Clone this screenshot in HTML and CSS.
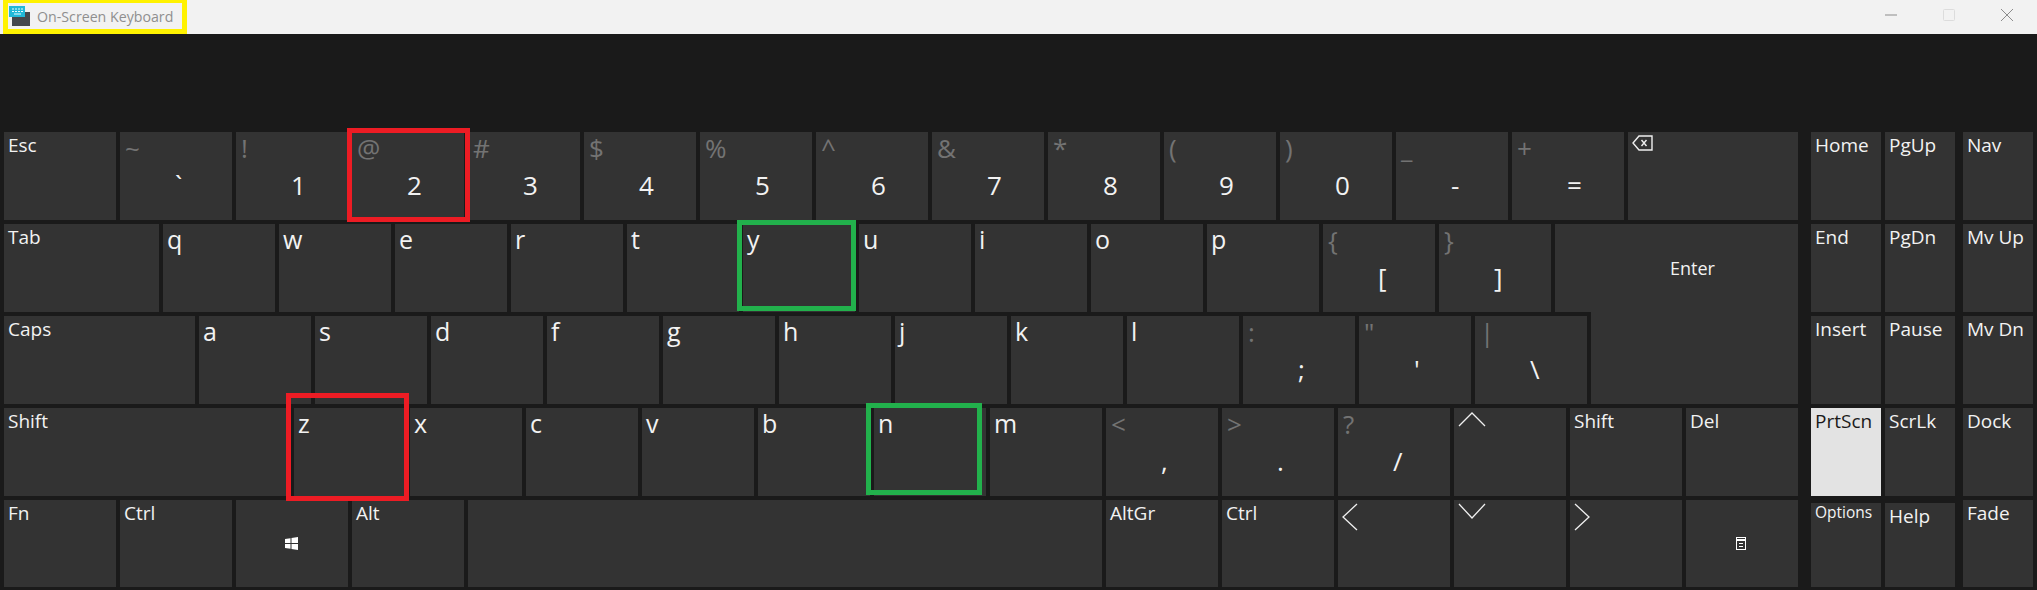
FILE: index.html
```html
<!DOCTYPE html>
<html lang="en">
<head>
    <meta charset="UTF-8">
    <meta name="viewport" content="width=device-width, initial-scale=1.0">
    <title>On-Screen Keyboard</title>
    <link rel="stylesheet" href="styles.css">
</head>
<body>
    <!-- Title bar -->
    <div class="titlebar">
        <div class="app-name">
            <svg class="app-icon" width="21" height="21" viewBox="0 0 21 21">
                <rect x="3" y="6" width="18" height="14" fill="#45484d"/>
                <rect x="0" y="0" width="16" height="11" fill="#22b8d8"/>
                <path d="M3 3h2M6 3h2M9 3h2M12 3h2M3 5.500h2M6 5.500h2M9 5.500h2M12 5.500h2M5 8h7" stroke="#e8fbff" stroke-width="1.2"/>
            </svg>
            <span>On-Screen Keyboard</span>
        </div>
        <div class="window-buttons">
            <svg width="12" height="12" viewBox="0 0 12 12"><path d="M0 6h12" stroke="#8c8c8c"/></svg>
            <svg width="12" height="12" viewBox="0 0 12 12"><rect x="0.500" y="0.500" width="11" height="11" rx="1" fill="none" stroke="#dcdcdc"/></svg>
            <svg width="12" height="12" viewBox="0 0 12 12"><path d="M0 0l12 12M12 0L0 12" stroke="#8c8c8c"/></svg>
        </div>
    </div>

    <div class="keyboard">
        <!-- Main keys -->
        <div class="main-keys">
            <div class="row">
                <div class="key"><span class="name">Esc</span></div>
                <div class="key"><span class="shift">~</span><span class="char">`</span></div>
                <div class="key"><span class="shift">!</span><span class="char">1</span></div>
                <div class="key"><span class="shift">@</span><span class="char">2</span></div>
                <div class="key"><span class="shift">#</span><span class="char">3</span></div>
                <div class="key"><span class="shift">$</span><span class="char">4</span></div>
                <div class="key"><span class="shift">%</span><span class="char">5</span></div>
                <div class="key"><span class="shift">^</span><span class="char">6</span></div>
                <div class="key"><span class="shift">&amp;</span><span class="char">7</span></div>
                <div class="key"><span class="shift">*</span><span class="char">8</span></div>
                <div class="key"><span class="shift">(</span><span class="char">9</span></div>
                <div class="key"><span class="shift">)</span><span class="char">0</span></div>
                <div class="key"><span class="shift">_</span><span class="char">-</span></div>
                <div class="key"><span class="shift">+</span><span class="char">=</span></div>
                <div class="key backspace">
                    <svg class="icon icon-back" width="21" height="16" viewBox="0 0 21 16">
                        <path d="M20 1H7L1 8l6 7h13z" fill="none" stroke="#f0f0f0" stroke-width="1.4"/>
                        <path d="M9.500 5l5 6M14.500 5l-5 6" stroke="#f0f0f0" stroke-width="1.4"/>
                    </svg>
                </div>
            </div>
            <div class="row">
                <div class="key tab"><span class="name">Tab</span></div>
                <div class="key"><span class="letter">q</span></div>
                <div class="key"><span class="letter">w</span></div>
                <div class="key"><span class="letter">e</span></div>
                <div class="key"><span class="letter">r</span></div>
                <div class="key"><span class="letter">t</span></div>
                <div class="key"><span class="letter">y</span></div>
                <div class="key"><span class="letter">u</span></div>
                <div class="key"><span class="letter">i</span></div>
                <div class="key"><span class="letter">o</span></div>
                <div class="key"><span class="letter">p</span></div>
                <div class="key"><span class="shift">{</span><span class="char">[</span></div>
                <div class="key"><span class="shift">}</span><span class="char">]</span></div>
                <div class="key enter-top"><span class="enter-label">Enter</span></div>
            </div>
            <div class="row">
                <div class="key caps"><span class="name">Caps</span></div>
                <div class="key"><span class="letter">a</span></div>
                <div class="key"><span class="letter">s</span></div>
                <div class="key"><span class="letter">d</span></div>
                <div class="key"><span class="letter">f</span></div>
                <div class="key"><span class="letter">g</span></div>
                <div class="key"><span class="letter">h</span></div>
                <div class="key"><span class="letter">j</span></div>
                <div class="key"><span class="letter">k</span></div>
                <div class="key"><span class="letter">l</span></div>
                <div class="key"><span class="shift">:</span><span class="char">;</span></div>
                <div class="key"><span class="shift">"</span><span class="char">'</span></div>
                <div class="key"><span class="shift">|</span><span class="char">\</span></div>
                <div class="key enter-foot"></div>
            </div>
            <div class="row">
                <div class="key lshift"><span class="name">Shift</span></div>
                <div class="key"><span class="letter">z</span></div>
                <div class="key"><span class="letter">x</span></div>
                <div class="key"><span class="letter">c</span></div>
                <div class="key"><span class="letter">v</span></div>
                <div class="key"><span class="letter">b</span></div>
                <div class="key"><span class="letter">n</span></div>
                <div class="key"><span class="letter">m</span></div>
                <div class="key"><span class="shift">&lt;</span><span class="char">,</span></div>
                <div class="key"><span class="shift">&gt;</span><span class="char">.</span></div>
                <div class="key"><span class="shift">?</span><span class="char">/</span></div>
                <div class="key">
                    <svg class="icon" width="28" height="16" viewBox="0 0 28 16"><path d="M1 15L14 2l13 13" fill="none" stroke="#f0f0f0" stroke-width="1.3"/></svg>
                </div>
                <div class="key"><span class="name">Shift</span></div>
                <div class="key"><span class="name">Del</span></div>
            </div>
            <div class="row">
                <div class="key"><span class="name">Fn</span></div>
                <div class="key"><span class="name">Ctrl</span></div>
                <div class="key center-icon">
                    <svg width="13" height="13" viewBox="0 0 13 13"><path d="M0 2l5.500-.8V6H0zM6.500 1l6.500-1v6H6.500zM0 7h5.500v4.800L0 11zM6.500 7H13v6l-6.500-1z" fill="#fff"/></svg>
                </div>
                <div class="key"><span class="name">Alt</span></div>
                <div class="key space"></div>
                <div class="key"><span class="name">AltGr</span></div>
                <div class="key"><span class="name">Ctrl</span></div>
                <div class="key">
                    <svg class="icon" width="16" height="28" viewBox="0 0 16 28"><path d="M15 1L1 14l14 13" fill="none" stroke="#f0f0f0" stroke-width="1.3"/></svg>
                </div>
                <div class="key">
                    <svg class="icon" width="28" height="16" viewBox="0 0 28 16"><path d="M1 1l13 14L27 1" fill="none" stroke="#f0f0f0" stroke-width="1.3"/></svg>
                </div>
                <div class="key">
                    <svg class="icon" width="16" height="28" viewBox="0 0 16 28"><path d="M1 1l14 13L1 27" fill="none" stroke="#f0f0f0" stroke-width="1.3"/></svg>
                </div>
                <div class="key center-icon">
                    <svg width="10" height="13" viewBox="0 0 10 13">
                        <rect x="0.500" y="0.500" width="9" height="12" fill="none" stroke="#fff"/>
                        <path d="M0 3h10" stroke="#fff" stroke-width="2"/>
                        <path d="M3 6.500h4M3 9.500h4" stroke="#fff"/>
                    </svg>
                </div>
            </div>
        </div>

        <!-- Navigation keys -->
        <div class="nav-keys">
            <div class="row">
                <div class="key small"><span class="name">Home</span></div>
                <div class="key small"><span class="name">PgUp</span></div>
                <div class="key small nav-col"><span class="name">Nav</span></div>
            </div>
            <div class="row">
                <div class="key small"><span class="name">End</span></div>
                <div class="key small"><span class="name">PgDn</span></div>
                <div class="key small nav-col"><span class="name">Mv Up</span></div>
            </div>
            <div class="row">
                <div class="key small"><span class="name">Insert</span></div>
                <div class="key small"><span class="name">Pause</span></div>
                <div class="key small nav-col"><span class="name">Mv Dn</span></div>
            </div>
            <div class="row">
                <div class="key small pressed"><span class="name">PrtScn</span></div>
                <div class="key small"><span class="name">ScrLk</span></div>
                <div class="key small nav-col"><span class="name">Dock</span></div>
            </div>
            <div class="row">
                <div class="key small inset"><span class="name options">Options</span></div>
                <div class="key small inset"><span class="name">Help</span></div>
                <div class="key small nav-col"><span class="name">Fade</span></div>
            </div>
        </div>
    </div>

    <!-- Highlight boxes drawn over the screenshot -->
    <div class="mark mark-yellow"></div>
    <div class="mark mark-red mark-2"></div>
    <div class="mark mark-green mark-y"></div>
    <div class="mark mark-red mark-z"></div>
    <div class="mark mark-green mark-n"></div>
</body>
</html>
```

FILE: styles.css
```css
* {
    box-sizing: border-box;
}

html, body {
    height: 100%;
}

body {
    margin: 0;
    position: relative;
    overflow: hidden;
    background-color: #1a1a1a;
    font-family: "Open Sans", "Noto Sans", sans-serif;
}

.titlebar {
    height: 34px;
    background-color: #f2f2f2;
    display: flex;
    justify-content: space-between;
    align-items: center;
    padding: 0 24px 2px 9px;
}

.app-name {
    display: flex;
    align-items: center;
    gap: 7px;
    font-size: 14.200px;
    color: #8f8f8f;
}

.window-buttons {
    display: flex;
    gap: 46px;
    margin-bottom: 2px;
}

.keyboard {
    display: flex;
    gap: 13px;
    padding: 98px 0 0 4px;
}

.main-keys, .nav-keys {
    display: flex;
    flex-direction: column;
    gap: 4px;
}

.row {
    display: flex;
    gap: 4px;
}

.key {
    width: 112px;
    height: 88px;
    background-color: #333333;
    color: #f2f2f2;
    flex: none;
}

.row:last-child .key {
    height: 87px;
}

.backspace { width: 170px; }
.tab { width: 155px; }
.caps { width: 191px; }
.lshift { width: 286px; }
.space { width: 634px; }

/* Enter is L shaped: two boxes, the lower one closes the row gap */
.enter-top {
    width: 243px;
    display: flex;
    align-items: center;
    padding-left: 115px;
}

.enter-foot {
    width: 207px;
    height: 92px;
    margin-top: -4px;
}

.enter-label {
    font-size: 18px;
    line-height: 1;
}

.small { width: 70px; }
.nav-col { margin-left: 4px; }

.row:last-child .inset {
    height: 84px;
    margin-top: 3px;
}

.pressed {
    background-color: #e3e3e3;
    color: #1a1a1a;
}

.name, .letter, .shift, .char {
    display: block;
    line-height: 1;
}

.name {
    padding: 4px 0 0 4px;
    font-size: 19px;
}

.options {
    padding-top: 2px;
    font-size: 15.500px;
}

.letter {
    padding: 3px 0 0 4px;
    font-size: 25px;
}

.shift {
    height: 29px;
    padding: 3px 0 0 5px;
    font-size: 26px;
    color: #737373;
}

.char {
    padding: 11px 0 0 55px;
    font-size: 26px;
}

.icon {
    display: block;
    margin: 3px 0 0 4px;
}

.center-icon {
    display: flex;
    align-items: center;
    justify-content: center;
    padding-right: 2px;
}

/* annotation boxes */
.mark {
    position: absolute;
    border: 5px solid;
}

.mark-red { border-color: #ed1c24; }
.mark-green { border-color: #22b14c; }
.mark-yellow { border-color: #fff200; left: 3px; top: -2px; width: 184px; height: 36px; }
.mark-2 { left: 347px; top: 128px; width: 123px; height: 94px; }
.mark-y { left: 737px; top: 220px; width: 119px; height: 91px; }
.mark-z { left: 286px; top: 393px; width: 123px; height: 108px; }
.mark-n { left: 866px; top: 403px; width: 116px; height: 92px; }
```
